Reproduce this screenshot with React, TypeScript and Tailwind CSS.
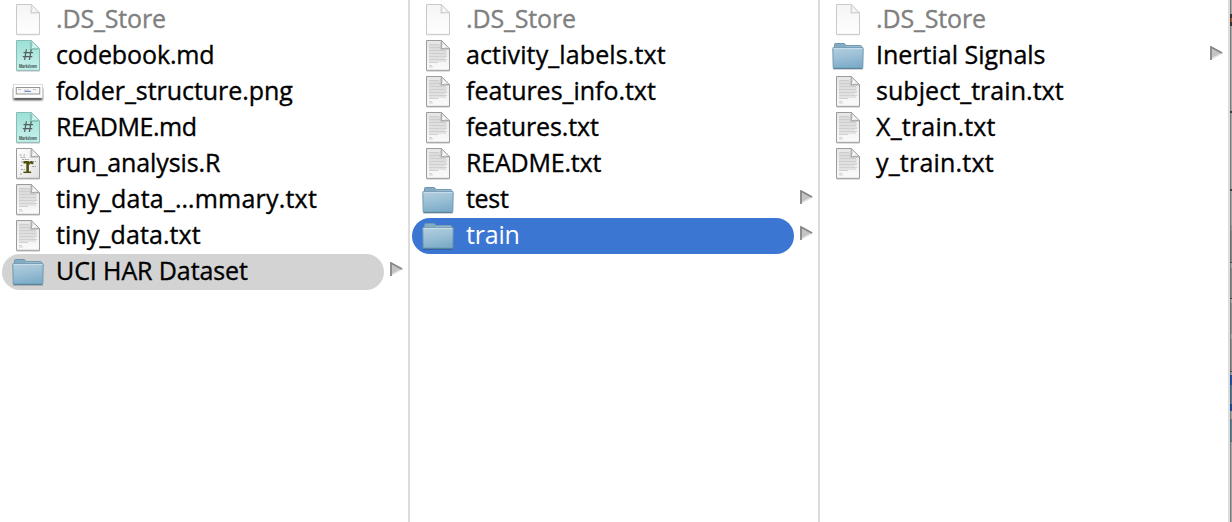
type Kind = "blank" | "text" | "markdown" | "image" | "r" | "folder";
type Entry = { name: string; kind: Kind; tracking?: string; state?: "path" | "active"; muted?: boolean };

const columns: Entry[][] = [
  [
    { name: ".DS_Store", kind: "blank", muted: true, tracking: "tracking-[-0.15px]" },
    { name: "codebook.md", kind: "markdown", tracking: "tracking-[-0.12px]" },
    { name: "folder_structure.png", kind: "image", tracking: "tracking-[-0.06px]" },
    { name: "README.md", kind: "markdown", tracking: "tracking-[-0.45px]" },
    { name: "run_analysis.R", kind: "r", tracking: "tracking-[-0.12px]" },
    { name: "tiny_data_…mmary.txt", kind: "text", tracking: "tracking-[0.21px]" },
    { name: "tiny_data.txt", kind: "text", tracking: "tracking-[0.1px]" },
    { name: "UCI HAR Dataset", kind: "folder", state: "path", tracking: "tracking-[-0.1px]" },
  ],
  [
    { name: ".DS_Store", kind: "blank", muted: true, tracking: "tracking-[-0.15px]" },
    { name: "activity_labels.txt", kind: "text", tracking: "tracking-[0.12px]" },
    { name: "features_info.txt", kind: "text", tracking: "tracking-[-0.03px]" },
    { name: "features.txt", kind: "text", tracking: "tracking-[-0.12px]" },
    { name: "README.txt", kind: "text", tracking: "tracking-[-0.2px]" },
    { name: "test", kind: "folder", tracking: "tracking-[-0.3px]" },
    { name: "train", kind: "folder", state: "active", tracking: "tracking-[-0.2px]" },
  ],
  [
    { name: ".DS_Store", kind: "blank", muted: true, tracking: "tracking-[-0.15px]" },
    { name: "Inertial Signals", kind: "folder" },
    { name: "subject_train.txt", kind: "text", tracking: "tracking-[0.05px]" },
    { name: "X_train.txt", kind: "text", tracking: "tracking-[0.2px]" },
    { name: "y_train.txt", kind: "text", tracking: "tracking-[0.2px]" },
  ],
];

const textLines = [
  [6.5, 10], [8, 11], [9.5, 11], [11, 11], [12.5, 17], [14, 18], [15.5, 17], [17, 18],
  [18.5, 18], [20, 16], [21.5, 18], [23, 17], [24.5, 9], [27.5, 3], [29, 4],
];

function Gradients() {
  return (
    <svg width="0" height="0" className="absolute" aria-hidden="true">
      <defs>
        <linearGradient id="paper" x1="0" y1="0" x2="0" y2="1">
          <stop offset="0" stopColor="#e6e6e6" /><stop offset="1" stopColor="#fbfbfb" />
        </linearGradient>
        <linearGradient id="blank" x1="0" y1="0" x2="0" y2="1">
          <stop offset="0" stopColor="#f5f5f5" /><stop offset="1" stopColor="#fefefe" />
        </linearGradient>
        <linearGradient id="mint" x1="0" y1="0" x2="0" y2="1">
          <stop offset="0" stopColor="#9be0d6" /><stop offset="1" stopColor="#c9f1eb" />
        </linearGradient>
        <linearGradient id="rpaper" x1="0" y1="0" x2="1" y2="1">
          <stop offset="0" stopColor="#ffffff" /><stop offset="1" stopColor="#e2e2e2" />
        </linearGradient>
        <linearGradient id="fold" x1="0" y1="1" x2="1" y2="0">
          <stop offset="0" stopColor="#ffffff" /><stop offset="0.5" stopColor="#f2f2f2" /><stop offset="1" stopColor="#ffffff" />
        </linearGradient>
        <linearGradient id="mintfold" x1="0" y1="1" x2="1" y2="0">
          <stop offset="0" stopColor="#d9faf5" /><stop offset="1" stopColor="#b7ece4" />
        </linearGradient>
        <linearGradient id="folderface" x1="0" y1="0" x2="0.25" y2="1">
          <stop offset="0" stopColor="#b4cfdf" /><stop offset="0.5" stopColor="#9cc0d6" /><stop offset="1" stopColor="#7eadc9" />
        </linearGradient>
        <filter id="soft" x="-20%" y="-50%" width="140%" height="220%">
          <feGaussianBlur stdDeviation="0.9" />
        </filter>
      </defs>
    </svg>
  );
}

function FolderIcon() {
  return (
    <>
      <path d="M1 31.3H31" stroke="#000" strokeOpacity="0.22" strokeWidth="1" />
      <path d="M2.5 12V6.4Q2.5 5.5 3.6 5.5H11.6Q12.8 5.5 13.3 6.4L14 7.5H28.6Q29.6 7.5 29.6 8.6V12Z" fill="#83abc4" stroke="#6e95ad" />
      <path d="M14 8.3H29" stroke="#a3c2d4" strokeWidth="0.8" />
      <path d="M1.4 9.5H30.6Q31.3 9.5 31.2 10.3L30.8 29.6Q30.7 30.5 29.9 30.5H2.1Q1.3 30.5 1.2 29.6L.8 10.3Q.7 9.5 1.4 9.5Z" fill="url(#folderface)" stroke="#7197ae" />
      <path d="M1.6 10.4H30.4" stroke="#cadfeb" />
      <path d="M1.8 30.3H30.2" stroke="#54809b" />
    </>
  );
}

function ImageIcon() {
  return (
    <>
      <rect x="1.5" y="14" width="29" height="12" fill="#000" opacity="0.85" filter="url(#soft)" />
      <rect x="1.3" y="10.5" width="29.4" height="13.5" fill="#fff" stroke="#c5c5c5" strokeWidth="0.6" />
      <rect x="4.2" y="13.5" width="23.6" height="6.5" fill="#f7f7f7" stroke="#8a8a8a" strokeWidth="0.9" />
      <path d="M6 15.5H9M12 16H17M21 15.5H24" stroke="#b5b5b5" strokeWidth="0.8" />
      <path d="M12.5 17.4H19" stroke="#5785c8" strokeWidth="1" />
    </>
  );
}

function DocumentIcon({ kind }: { kind: Kind }) {
  const md = kind === "markdown";
  const blank = kind === "blank";
  const fill = md ? "url(#mint)" : blank ? "url(#blank)" : kind === "r" ? "url(#rpaper)" : "url(#paper)";
  const edge = md ? "#86bdb5" : blank ? "#c9c9c9" : "#9b9b9b";
  return (
    <>
      <path d="M4.5 33H27.8" stroke="#000" strokeOpacity={blank ? 0.12 : 0.3} strokeWidth="0.9" />
      <path d="M4.5 2.5H19.4L27.5 10.8V32.3H4.5Z" fill={fill} stroke={edge} />
      {kind === "text" && textLines.map(([y, w]) => (
        <path key={y} d={`M7 ${y}h${w}`} stroke="#c2c2c2" strokeWidth="0.7" />
      ))}
      {md && (
        <>
          <path d="M14.4 11.4L12.6 22M19.2 11.4L17.4 22M11.5 14.7H21M10.8 18.6H20.3" fill="none" stroke="#555f5e" strokeWidth="1.25" />
          <text x="16" y="30" textAnchor="middle" fontSize="5" fontWeight="700" fill="#36504d" fontFamily="Liberation Sans, sans-serif" textLength="18" lengthAdjust="spacingAndGlyphs">Markdown</text>
        </>
      )}
      {kind === "r" && (
        <>
          <path d="M7.5 9H10M11.5 9H13M8.5 11.3H14M10 13.5H17M9 16H13M20 15.5H24M8.5 19.5H11M20 20.5H24M9 23.5H13M8 28H10" stroke="#999" strokeWidth="0.9" strokeDasharray="2 .7" />
          <path d="M11.5 16.3H15.6V26.3" fill="none" stroke="#52500a" strokeWidth="2.6" />
          <path d="M16.5 18.4Q17.5 15.8 20.2 16" fill="none" stroke="#52500a" strokeWidth="2" />
          <circle cx="20.2" cy="17" r="1.3" fill="#52500a" />
          <path d="M11.4 26.3H19.2" stroke="#52500a" strokeWidth="1.5" />
        </>
      )}
      <path d="M18.6 3V11.4H27.5Z" fill="#000" opacity={blank ? 0.06 : 0.14} transform="translate(-.7 .7)" />
      <path d="M19.3 2.5Q20.6 6.5 19.4 10.8Q23.5 9.6 27.5 10.8Z" fill={md ? "url(#mintfold)" : "url(#fold)"} stroke={edge} strokeWidth="0.85" strokeLinejoin="round" />
    </>
  );
}

function FileIcon({ kind }: { kind: Kind }) {
  return (
    <svg width="32" height="36" viewBox="0 0 32 36" className="shrink-0" aria-hidden="true">
      {kind === "folder" ? <FolderIcon /> : kind === "image" ? <ImageIcon /> : <DocumentIcon kind={kind} />}
    </svg>
  );
}

function Disclosure() {
  return (
    <svg width="13" height="15" viewBox="0 0 13 15" className="ml-1.5 mt-2 shrink-0" aria-hidden="true">
      <path d="M0 0L13 7L0 14Z" fill="#c4c4c4" />
      <path d="M1 13L12 7.3" stroke="#e6e6e6" strokeWidth="1.3" />
      <path d="M1 14V1L12 7" fill="none" stroke="#858585" strokeWidth="1.7" />
    </svg>
  );
}

function Row({ name, kind, tracking = "", state, muted }: Entry) {
  const tone =
    state === "active" ? "bg-[#3b76d3] text-white"
    : state === "path" ? "bg-[#d3d3d3] text-black [-webkit-text-stroke:0.35px_black]"
    : muted ? "text-[#808080] [-webkit-text-stroke:0.35px_#808080]"
    : "text-black [-webkit-text-stroke:0.35px_black]";
  return (
    <li className="flex h-9">
      <div className={`flex h-9 w-[382px] shrink-0 items-center rounded-full pl-2.5 ${tone}`}>
        <FileIcon kind={kind} />
        <span className={`ml-3 whitespace-pre pb-1 text-[25px] leading-8 ${tracking}`}>{name}</span>
      </div>
      {kind === "folder" && <Disclosure />}
    </li>
  );
}

const edgeSegments = [
  "h-[14px] bg-[#a5a7aa] border-[#7d7d7d]", "h-[4px] bg-[#343434] border-[#303030]", "h-[4px] bg-[#a45a30] border-[#5c4030]",
  "h-[4px] bg-[#343438] border-[#303030]", "h-[85px] bg-[#a5a7aa] border-[#7d7d7d]", "h-[2px] bg-[#3c3c3c] border-[#3c3c3c]",
  "h-[76px] bg-[#a5a7aa] border-[#7d7d7d]", "h-[2px] bg-[#3c3c3c] border-[#3c3c3c]", "h-[34px] bg-[#a0a2a4] border-[#7d7d7d]",
  "h-[6px] bg-[#929292] border-[#777777]", "h-[31px] bg-[#858585] border-[#707070]", "h-[1px] bg-[#4b4b4b] border-[#4b4b4b]",
  "h-[5px] bg-[#a4a4a4] border-[#7d7d7d]", "h-[30px] bg-[#888888] border-[#747474]", "h-[1px] bg-[#434343] border-[#434343]",
  "h-[4px] bg-[#a4a4a4] border-[#7d7d7d]", "h-[31px] bg-[#8c8c8c] border-[#747474]", "h-[5px] bg-[#a4a4a4] border-[#7d7d7d]",
  "h-[32px] bg-[#8c8c8c] border-[#747474]", "h-[1px] bg-[#4b4b4b] border-[#4b4b4b]", "h-[3px] bg-[#a0a0a0] border-[#7d7d7d]",
  "h-[10px] bg-[#2453a1] border-[#204582]", "h-[19px] bg-[#58798f] border-[#496071]", "h-[7px] bg-[#204d9a] border-[#1c3f7d]",
  "h-[8px] bg-[#a2a2a2] border-[#7d7d7d]", "h-[22px] bg-[#5f8095] border-[#506673]", "h-[1px] bg-[#536775] border-[#536775]",
  "grow bg-[#a0a1a3] border-[#7d7d7d]",
];

export default function App() {
  return (
    <main className="flex h-[522px] w-[1232px] overflow-hidden bg-white font-['Open_Sans',sans-serif]">
      <Gradients />
      {columns.map((entries, i) => (
        <ul key={i} className="h-full w-[410px] shrink-0 border-r-2 border-[#dcdcdc] pl-0.5 pt-0.5">
          {entries.map((entry) => <Row key={entry.name} {...entry} />)}
        </ul>
      ))}
      <div className="flex h-full w-0.5 shrink-0 flex-col">
        {edgeSegments.map((segment, i) => <div key={i} className={`shrink-0 border-l ${segment}`} />)}
      </div>
    </main>
  );
}
